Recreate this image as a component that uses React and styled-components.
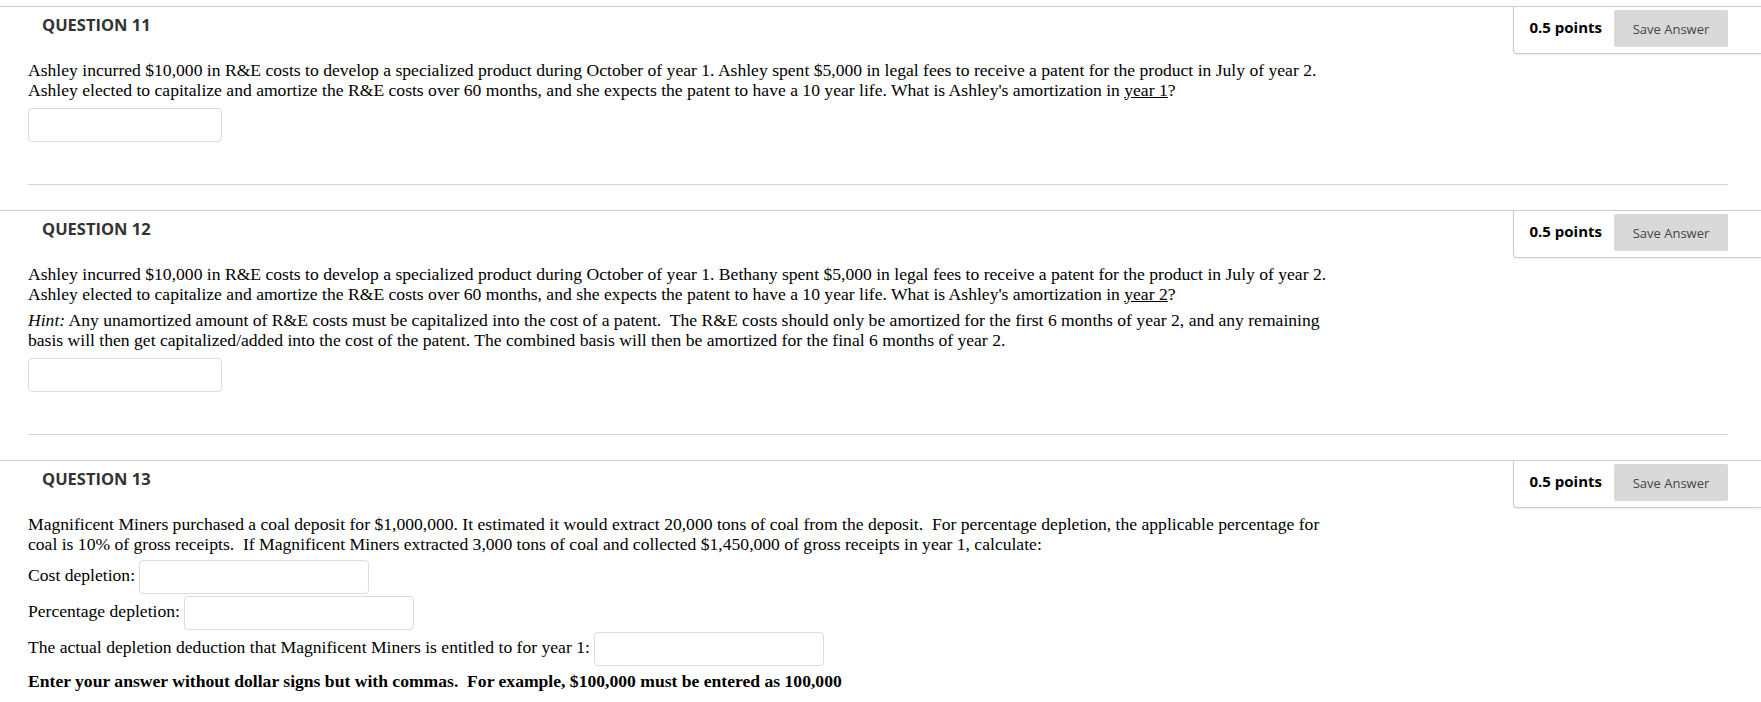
import React from "react";
import styled, { createGlobalStyle } from "styled-components";

const GlobalStyle = createGlobalStyle`
  body {
    margin: 0;
    background: #fff;
  }
`;

const Page = styled.div`
  padding-top: 6px;
  font-family: "Liberation Serif", "Times New Roman", serif;
  color: #000;
`;

const Question = styled.section`
  border-top: 1px solid #cfcfcf;
  & + & {
    margin-top: 25px;
  }
`;

const Header = styled.div`
  display: flex;
  justify-content: space-between;
  align-items: flex-start;
`;

const Title = styled.h3`
  margin: 0;
  padding: 8px 0 0 42px;
  font: 700 16.5px/20px "Open Sans", sans-serif;
  color: #333;
`;

const PointsBox = styled.div`
  display: flex;
  align-items: center;
  gap: 12px;
  padding: 3px 33px 6px 15px;
  border-left: 1px solid #cccccc;
  border-bottom: 1px solid #cccccc;
  border-bottom-left-radius: 4px;
  box-shadow: 0 1px 2px rgba(0, 0, 0, 0.08);
`;

const Points = styled.span`
  margin-bottom: 4px;
  font: 700 15px "Open Sans", sans-serif;
  color: #000;
`;

const SaveButton = styled.button`
  width: 114px;
  height: 37px;
  border: none;
  border-radius: 2px;
  background: #d9d9d9;
  color: #444;
  font: 400 13px "Open Sans", sans-serif;
  cursor: pointer;
`;

const Body = styled.div`
  margin: 0 33px 0 28px;
  padding: 7px 0 ${(p) => (p.$last ? 0 : 42)}px;
  border-bottom: ${(p) => (p.$last ? "none" : "1px solid #d3d3d3")};
  font-size: 17.6px;
  line-height: 19.5px;
`;

const Para = styled.p`
  margin: 0 0 ${(p) => p.$gap ?? 7}px;
  font-weight: ${(p) => (p.$bold ? 700 : 400)};
`;

const Answer = styled.input`
  display: block;
  box-sizing: border-box;
  width: ${(p) => p.$w || 194}px;
  height: 34px;
  margin-top: ${(p) => p.$top ?? 1}px;
  border: 1px solid #dcdcdc;
  border-radius: 4px;
  background: #fff;
  outline: none;
`;

const Row = styled.div`
  display: flex;
  align-items: center;
  gap: 4px;
  margin-bottom: 2px;
`;

const Label = styled.span`
  padding-bottom: 3px;
`;

const QuestionHeader = ({ num }) => (
  <Header>
    <Title>QUESTION {num}</Title>
    <PointsBox>
      <Points>0.5 points</Points>
      <SaveButton type="button">Save Answer</SaveButton>
    </PointsBox>
  </Header>
);

export default function App() {
  return (
    <Page>
      <GlobalStyle />
      <Question>
        <QuestionHeader num={11} />
        <Body>
          <Para $gap={0}>
            Ashley incurred $10,000 in R&amp;E costs to develop a specialized product during October of year 1. Ashley spent $5,000 in legal fees to receive a patent for the product in July of year 2.
            <br />
            Ashley elected to capitalize and amortize the R&amp;E costs over 60 months, and she expects the patent to have a 10 year life. What is Ashley's amortization in <u>year 1</u>?
          </Para>
          <Answer $top={8} />
        </Body>
      </Question>

      <Question>
        <QuestionHeader num={12} />
        <Body>
          <Para>
            Ashley incurred $10,000 in R&amp;E costs to develop a specialized product during October of year 1. Bethany spent $5,000 in legal fees to receive a patent for the product in July of year 2.
            <br />
            Ashley elected to capitalize and amortize the R&amp;E costs over 60 months, and she expects the patent to have a 10 year life. What is Ashley's amortization in <u>year 2</u>?
          </Para>
          <Para $gap={0}>
            <i>Hint:</i> Any unamortized amount of R&amp;E costs must be capitalized into the cost of a patent.{"\u00a0 "}The R&amp;E costs should only be amortized for the first 6 months of year 2, and any remaining
            <br />
            basis will then get capitalized/added into the cost of the patent. The combined basis will then be amortized for the final 6 months of year 2.
          </Para>
          <Answer $top={8} />
        </Body>
      </Question>

      <Question>
        <QuestionHeader num={13} />
        <Body $last>
          <Para $gap={6}>
            Magnificent Miners purchased a coal deposit for $1,000,000. It estimated it would extract 20,000 tons of coal from the deposit.{"\u00a0 "}For percentage depletion, the applicable percentage for
            <br />
            coal is 10% of gross receipts.{"\u00a0 "}If Magnificent Miners extracted 3,000 tons of coal and collected $1,450,000 of gross receipts in year 1, calculate:
          </Para>
          <Row>
            <Label>Cost depletion:</Label>
            <Answer $w={230} $top={0} />
          </Row>
          <Row>
            <Label>Percentage depletion:</Label>
            <Answer $w={230} $top={0} />
          </Row>
          <Row>
            <Label>The actual depletion deduction that Magnificent Miners is entitled to for year 1:</Label>
            <Answer $w={230} $top={0} />
          </Row>
          <Para $bold style={{ marginTop: 6 }}>
            Enter your answer without dollar signs but with commas.{"\u00a0 "}For example, $100,000 must be entered as 100,000
          </Para>
        </Body>
      </Question>
    </Page>
  );
}
